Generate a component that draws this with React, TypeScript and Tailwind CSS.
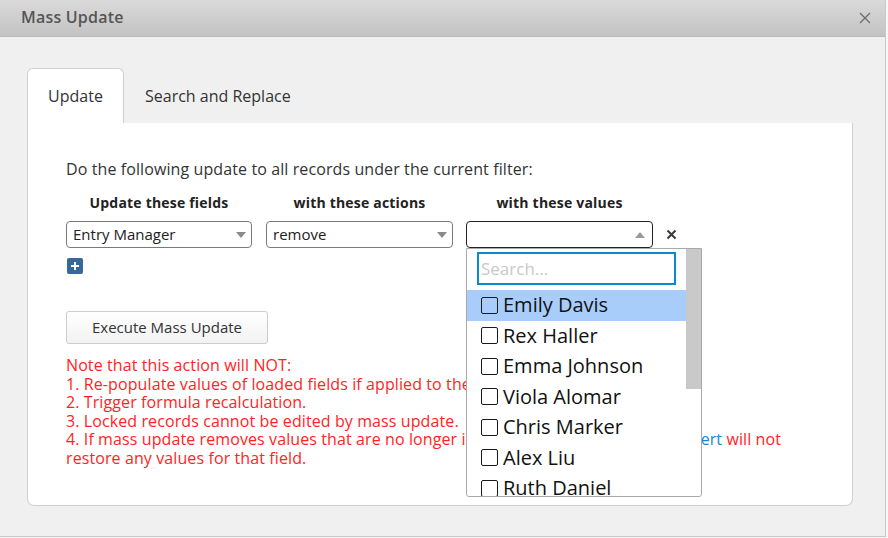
import React from 'react';

const names = ['Emily Davis', 'Rex Haller', 'Emma Johnson', 'Viola Alomar', 'Chris Marker', 'Alex Liu', 'Ruth Daniel'];

const Caret = ({ up }: { up?: boolean }) => (
    <svg width="12" height="8" viewBox="0 0 12 8" className="shrink-0">
        {up ? <path d="M1 7 L6 1 L11 7 Z" fill="#9a9a9a" /> : <path d="M1 1 L6 7 L11 1 Z" fill="#8a8a8a" />}
    </svg>
);

const App = () => {
    return (
        <div className="w-[888px] h-[538px] bg-[#f7f7f7] overflow-hidden" style={{ fontFamily: '"Open Sans", "Liberation Sans", sans-serif' }}>
            <div className="w-[886px] h-[537px] bg-[#f0f0f0] border-r border-b border-[#c9c9c9] flex flex-col">
                {/* header */}
                <div className="h-[37px] shrink-0 bg-gradient-to-b from-[#dadada] to-[#c3c3c3] border-b border-[#bababa] flex items-center justify-between pl-[21px] pr-[14px]">
                    <span className="text-[16px] font-semibold text-[#555] tracking-[0.2px] -mt-[2px]">Mass Update</span>
                    <svg width="12" height="12" viewBox="0 0 12 12">
                        <path d="M1 1 L11 11 M11 1 L1 11" stroke="#6a6a6a" strokeWidth="1.2" />
                    </svg>
                </div>

                <div className="pl-[27px] pt-[31px]">
                    {/* tabs */}
                    <div className="flex h-[55px]">
                        <div className="w-[97px] bg-white border border-b-0 border-[#cfcfcf] rounded-t-[6px] flex items-center justify-center text-[16px] text-[#333] relative z-10">
                            Update
                        </div>
                        <div className="pl-[21px] flex items-center text-[16px] text-[#333]">Search and Replace</div>
                    </div>

                    {/* panel */}
                    <div className="w-[826px] h-[383px] bg-white border-x border-b border-[#cfcfcf] rounded-b-[7px] pl-[38px] pt-[36px] text-[#333]">
                        <div className="text-[16px] leading-[20px] tracking-[0.1px] text-[#333]">Do the following update to all records under the current filter:</div>

                        <div className="mt-[14px] flex text-[14px] leading-[20px] font-bold tracking-[0.2px] text-[#222]">
                            <div className="w-[186px] text-center">Update these fields</div>
                            <div className="w-[187px] ml-[14px] text-center">with these actions</div>
                            <div className="w-[187px] ml-[13px] text-center">with these values</div>
                        </div>

                        <div className="mt-[8px] flex items-center">
                            <div className="w-[186px] h-[27px] border border-[#7a7a7a] rounded-[4px] flex items-center justify-between pl-[6px] pr-[4px] text-[15px] text-[#222]">
                                <span>Entry Manager</span>
                                <Caret />
                            </div>
                            <div className="w-[187px] h-[27px] ml-[14px] border border-[#7a7a7a] rounded-[4px] flex items-center justify-between pl-[6px] pr-[4px] text-[15px] text-[#222]">
                                <span>remove</span>
                                <Caret />
                            </div>
                            <div className="relative ml-[13px]">
                                <div className="w-[187px] h-[27px] border border-[#222] rounded-[4px] flex items-center justify-end pr-[6px]">
                                    <Caret up />
                                </div>
                                {/* dropdown */}
                                <div className="absolute left-0 top-[27px] w-[236px] h-[249px] bg-white border border-[#a9a9a9] rounded-b-[3px] flex overflow-hidden z-20">
                                    <div className="w-[219px] flex flex-col">
                                        <div className="pt-[3px] pl-[10px]">
                                            <div className="w-[199px] h-[33px] border-2 border-[#0b89cf] flex items-center pl-[2px] text-[17px] text-[#c9c9c9]">
                                                Search...
                                            </div>
                                        </div>
                                        <div className="mt-[5px]">
                                            {names.map((n, i) => (
                                                <div key={n} className={`h-[30.5px] flex items-center pl-[14px] gap-[5px] ${i === 0 ? 'bg-[#a9cdfb]' : ''}`}>
                                                    <span className="w-[17px] h-[17px] border-[1.5px] border-[#1a1a1a] rounded-[2px] shrink-0" />
                                                    <span className="text-[20px] text-[#111] whitespace-nowrap">{n}</span>
                                                </div>
                                            ))}
                                        </div>
                                    </div>
                                    <div className="w-[15px]">
                                        <div className="h-[140px] bg-[#c9c9c9]" />
                                    </div>
                                </div>
                            </div>
                            <svg width="11" height="11" viewBox="0 0 11 11" className="ml-[13px]">
                                <path d="M1.5 1.5 L9.5 9.5 M9.5 1.5 L1.5 9.5" stroke="#3a3a3a" strokeWidth="2" />
                            </svg>
                        </div>

                        <button className="mt-[10px] ml-[1px] w-[16px] h-[16px] bg-[#36689b] rounded-[2px] flex items-center justify-center">
                            <svg width="10" height="10" viewBox="0 0 10 10">
                                <path d="M5 1 V9 M1 5 H9" stroke="#fff" strokeWidth="2" />
                            </svg>
                        </button>

                        <button className="mt-[37px] w-[202px] h-[33px] border border-[#cdcdcd] rounded-[3px] bg-gradient-to-b from-white to-[#f2f2f2] text-[15px] text-[#333]">
                            Execute Mass Update
                        </button>

                        <div className="mt-[12px] text-[16px] leading-[18.5px] tracking-[0.1px] text-[#ff2424] whitespace-nowrap">
                            Note that this action will NOT:<br />
                            1. Re-populate values of loaded fields if applied to the source fields.<br />
                            2. Trigger formula recalculation.<br />
                            3. Locked records cannot be edited by mass update.<br />
                            4. If mass update removes values that are no longer in the list of allowed values, <span className="text-[#1a87d6]">Revert</span> will not<br />
                            restore any values for that field.
                        </div>
                    </div>
                </div>
            </div>
        </div>
    );
};

export default App;
